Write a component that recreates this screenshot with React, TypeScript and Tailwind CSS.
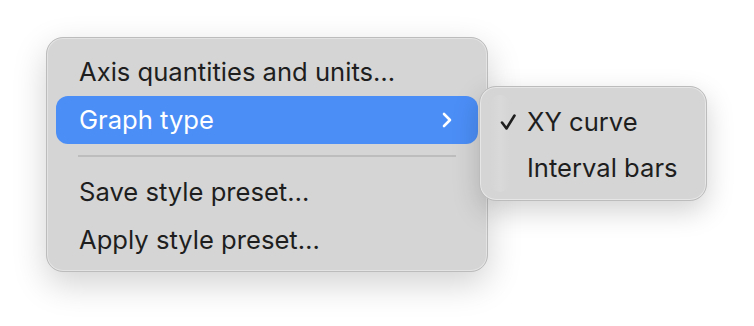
const topItems = ['Axis quantities and units…'];
const bottomItems = ['Save style preset…', 'Apply style preset…'];

const subItems = [
  { name: 'XY curve', checked: true },
  { name: 'Interval bars', checked: false },
];

function Chevron() {
  return (
    <svg width="10" height="16" viewBox="0 0 10 16" fill="none">
      <path
        d="M2 2l6 6-6 6"
        stroke="white"
        strokeWidth="2.6"
        strokeLinecap="round"
        strokeLinejoin="round"
      />
    </svg>
  );
}

function Check() {
  return (
    <svg width="16" height="16" viewBox="0 0 16 16" fill="none">
      <path
        d="M2 8.5l4.5 6L14.5 1.5"
        stroke="#1e1e1e"
        strokeWidth="2.6"
        strokeLinecap="round"
        strokeLinejoin="round"
      />
    </svg>
  );
}

export default function App() {
  return (
    <div
      className="w-[754px] h-[326px] bg-white overflow-hidden pt-[37px] pl-[46px]"
      style={{ fontFamily: 'Inter, "Noto Sans", sans-serif' }}
    >
      <div className="relative w-[442px] h-[235px] rounded-[17px] bg-[#d5d5d5] border border-[#bcbcbc] shadow-[0_12px_34px_rgba(0,0,0,0.18),inset_0_0_0_1px_rgba(255,255,255,0.35)] px-[9px] pt-[10px] pb-[7px] text-[25.6px] text-[#1e1e1e]">
        {topItems.map((item) => (
          <div key={item} className="h-12 flex items-center pl-[23px]">
            {item}
          </div>
        ))}
        <div className="h-12 flex items-center justify-between pl-[23px] pr-[26px] rounded-[12px] bg-[#4b8ef6] text-white">
          <span>Graph type</span>
          <Chevron />
        </div>
        <div className="h-6 flex items-center px-[22px]">
          <div className="w-full h-[2px] bg-[#bdbdbd]" />
        </div>
        {bottomItems.map((item) => (
          <div key={item} className="h-12 flex items-center pl-[23px]">
            {item}
          </div>
        ))}

        <div className="absolute left-[432px] top-[48px] w-[228px] h-[115px] rounded-[17px] bg-[#d5d5d5] border border-[#bcbcbc] shadow-[0_10px_28px_rgba(0,0,0,0.18),inset_0_0_0_1px_rgba(255,255,255,0.4)] pt-[12px] pb-[9px] px-[9px]">
          <div className="absolute left-[10px] top-[8px] bottom-[8px] w-[20px] rounded-full bg-gradient-to-r from-transparent via-white/10 to-transparent" />
          {subItems.map((item) => (
            <div key={item.name} className="relative h-[46px] flex items-center">
              <span className="w-[38px] flex justify-center">
                {item.checked && <Check />}
              </span>
              <span>{item.name}</span>
            </div>
          ))}
        </div>
      </div>
    </div>
  );
}
